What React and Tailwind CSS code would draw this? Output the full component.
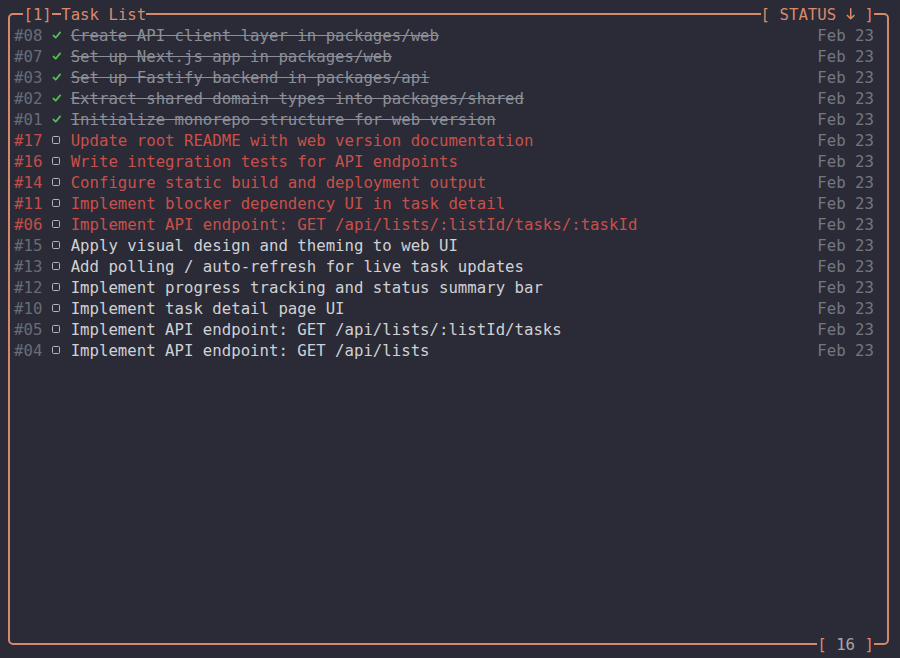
const tasks = [
  { id: "08", title: "Create API client layer in packages/web", state: "done" },
  { id: "07", title: "Set up Next.js app in packages/web", state: "done" },
  { id: "03", title: "Set up Fastify backend in packages/api", state: "done" },
  { id: "02", title: "Extract shared domain types into packages/shared", state: "done" },
  { id: "01", title: "Initialize monorepo structure for web version", state: "done" },
  { id: "17", title: "Update root README with web version documentation", state: "blocked" },
  { id: "16", title: "Write integration tests for API endpoints", state: "blocked" },
  { id: "14", title: "Configure static build and deployment output", state: "blocked" },
  { id: "11", title: "Implement blocker dependency UI in task detail", state: "blocked" },
  { id: "06", title: "Implement API endpoint: GET /api/lists/:listId/tasks/:taskId", state: "blocked" },
  { id: "15", title: "Apply visual design and theming to web UI", state: "todo" },
  { id: "13", title: "Add polling / auto-refresh for live task updates", state: "todo" },
  { id: "12", title: "Implement progress tracking and status summary bar", state: "todo" },
  { id: "10", title: "Implement task detail page UI", state: "todo" },
  { id: "05", title: "Implement API endpoint: GET /api/lists/:listId/tasks", state: "todo" },
  { id: "04", title: "Implement API endpoint: GET /api/lists", state: "todo" },
];

function Check() {
  return (
    <svg viewBox="0 0 10 10" className="w-[10px] h-[10px]">
      <path d="M1.6 5.6 L3.9 7.9 L8.6 2.2" fill="none" stroke="#4fc24f" strokeWidth="1.9" strokeLinecap="round" strokeLinejoin="round" />
    </svg>
  );
}

function Box() {
  return <span className="block w-[8px] h-[8px] border border-[#b4b4b8] rounded-[1.5px]" />;
}

function ArrowDown() {
  return (
    <span className="inline-flex w-[9.45px] h-[21px] items-center justify-center">
      <svg viewBox="0 0 10 14" className="w-[10px] h-[14px]">
        <path d="M5 1.5 V12 M1.5 8.5 L5 12 L8.5 8.5" fill="none" stroke="#d98a6c" strokeWidth="1.6" strokeLinecap="round" strokeLinejoin="round" />
      </svg>
    </span>
  );
}

function Row({ task }) {
  const idColor = task.state === "blocked" ? "text-[#c24e49]" : "text-[#686c78]";
  const titleColor =
    task.state === "done"
      ? "text-[#8c8f98] line-through decoration-[#8c8f98]"
      : task.state === "blocked"
      ? "text-[#c9504a]"
      : "text-[#d0d1d5]";

  return (
    <div className="flex justify-between h-[21px] items-center whitespace-pre">
      <div className="flex items-center">
        <span className={idColor}>#{task.id}</span>
        <span className="w-[9.45px]" />
        <span className="w-[9.45px] flex justify-center items-center">
          {task.state === "done" ? <Check /> : <Box />}
        </span>
        <span className="w-[9.45px]" />
        <span className={titleColor}>{task.title}</span>
      </div>
      <span className="text-[#737782]">Feb 23</span>
    </div>
  );
}

export default function App() {
  return (
    <div
      className="w-[900px] h-[658px] bg-[#2a2b36] overflow-hidden pt-[13px] pl-[8.3px] text-[15.7px] leading-[21px]"
      style={{ fontFamily: '"DejaVu Sans Mono", "Liberation Mono", monospace' }}
    >
      <div className="w-[881px] h-[632px] border-2 border-[#d4886c] rounded-[5px] flex flex-col">
        {/* header on the top border */}
        <div className="-mt-[11.5px] h-[21px] flex justify-between items-center pl-[13.15px] pr-[13.35px] whitespace-pre text-[#d98a6c]">
          <div className="flex">
            <span className="bg-[#2a2b36]">[1]</span>
            <span className="w-[9.45px]" />
            <span className="bg-[#2a2b36]">Task List</span>
          </div>
          <span className="bg-[#2a2b36] flex items-center">
            [ STATUS <ArrowDown /> ]
          </span>
        </div>

        <div className="flex flex-col pl-[3.7px] pr-[13.35px]">
          {tasks.map((t) => (
            <Row key={t.id} task={t} />
          ))}
        </div>

        <div className="flex-1" />

        {/* footer on the bottom border */}
        <div className="-mb-[11.5px] h-[21px] flex justify-end items-center pr-[13.35px] whitespace-pre">
          <span className="bg-[#2a2b36] text-[#d98a6c]">
            [ <span className="text-[#aaa6a6]">16</span> ]
          </span>
        </div>
      </div>
    </div>
  );
}
